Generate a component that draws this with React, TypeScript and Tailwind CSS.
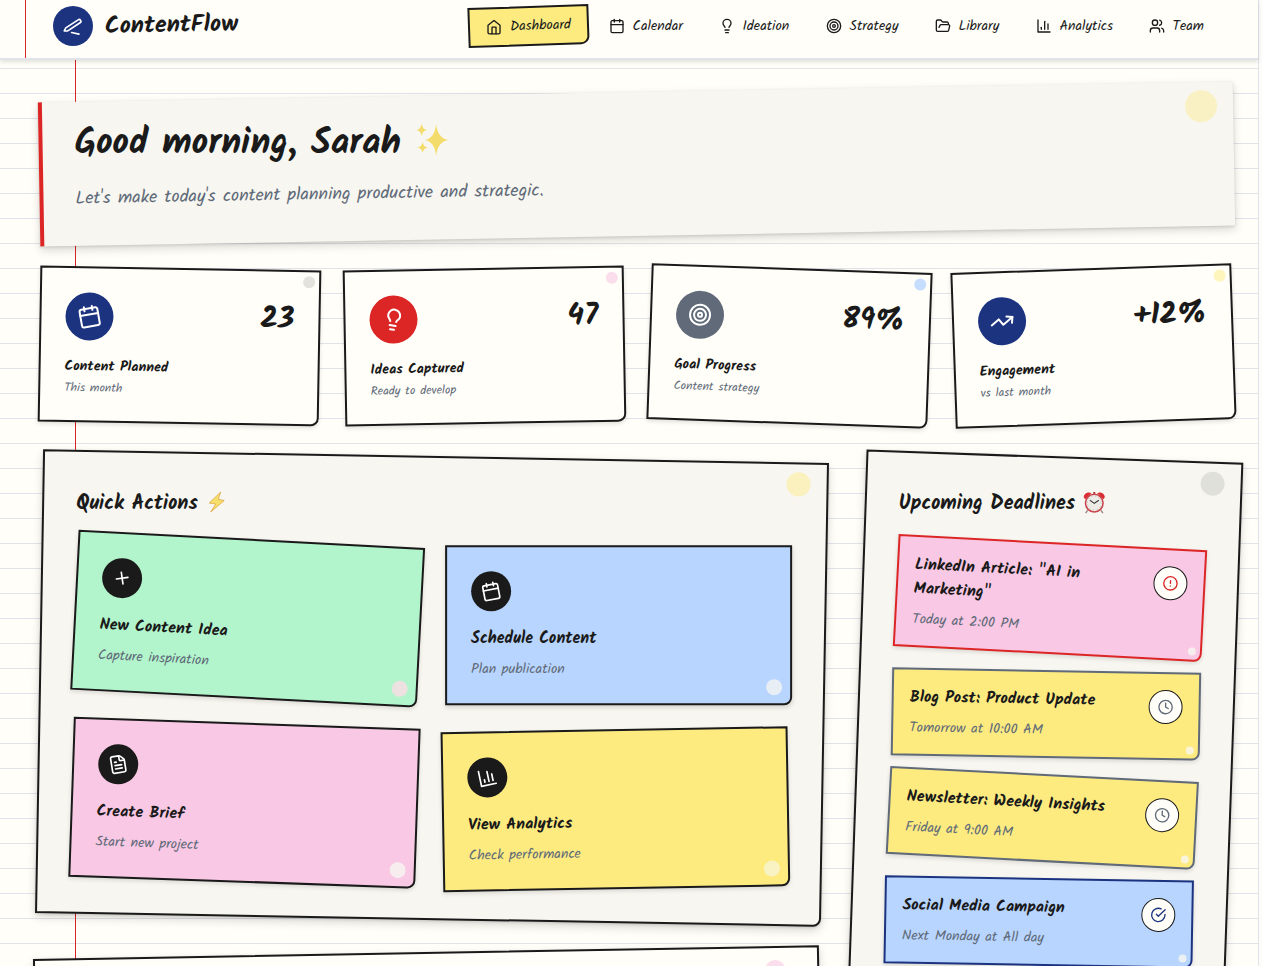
import type { ReactNode } from 'react'
import { clsx } from 'clsx'
import {
  Calendar,
  CircleAlert,
  Clock,
  FileText,
  FolderOpen,
  Lightbulb,
  Plus,
  Target,
  TrendingUp,
  Users,
  createLucideIcon,
} from 'lucide-react'
import type { LucideIcon } from 'lucide-react'

const SKETCH = 'rounded-br-lg border-2'
const SOFT_SHADOW = 'shadow-[0_2px_4px_rgba(0,0,0,0.12)]'
const DEEP_SHADOW = 'shadow-[0_4px_10px_rgba(0,0,0,0.15),0_1px_3px_rgba(0,0,0,0.12)]'

// Sharper variants of the stock icons
const SlimPen = createLucideIcon('slim-pen', [
  ['path', { d: 'M12 20h9', key: 'line' }],
  ['path', { d: 'M16.5 3.5a2.12 2.12 0 0 1 3 3L7 19l-4 1 1-4Z', key: 'pen' }],
])

const Home = createLucideIcon('home-sharp', [
  ['path', { d: 'm3 9 9-7 9 7v11a2 2 0 0 1-2 2H5a2 2 0 0 1-2-2z', key: 'walls' }],
  ['polyline', { points: '9 22 9 12 15 12 15 22', key: 'door' }],
])

const BarChart = createLucideIcon('bar-chart-sharp', [
  ['path', { d: 'M3 3v18h18', key: 'axis' }],
  ['path', { d: 'M18 17V9', key: 'b3' }],
  ['path', { d: 'M13 17V5', key: 'b2' }],
  ['path', { d: 'M8 17v-3', key: 'b1' }],
])

const CheckCircle = createLucideIcon('check-circle-open', [
  ['path', { d: 'M22 11.08V12a10 10 0 1 1-5.93-9.14', key: 'ring' }],
  ['path', { d: 'm9 11 3 3L22 4', key: 'check' }],
])

const NAV_ITEMS: { label: string; icon: LucideIcon; box: string; active?: boolean }[] = [
  { label: 'Dashboard', icon: Home, box: 'w-[120.5px] mr-[2px]', active: true },
  { label: 'Calendar', icon: Calendar, box: 'w-[110px]' },
  { label: 'Ideation', icon: Lightbulb, box: 'w-[107px]' },
  { label: 'Strategy', icon: Target, box: 'w-[109px]' },
  { label: 'Library', icon: FolderOpen, box: 'w-[101px]' },
  { label: 'Analytics', icon: BarChart, box: 'w-[113px]' },
  { label: 'Team', icon: Users, box: 'w-[91px]' },
]

const Header = () => (
  <header className="relative z-10 flex h-[60px] items-start border-b-2 border-[#e0e3ea] bg-[#fffef8] pt-[6px] pl-[53px] shadow-[0_2px_4px_rgba(0,0,0,0.12)]">
    <div className="absolute top-0 left-[25px] h-[58px] w-px bg-[#dc2626]" />
    <div className="flex h-10 w-[415px] items-center gap-3">
      <div className="flex size-10 items-center justify-center rounded-full bg-[#1c3480]">
        <SlimPen className="size-5 rotate-12 text-white" />
      </div>
      <div className="-rotate-1 text-2xl leading-8 font-bold">ContentFlow</div>
    </div>
    <nav className="flex h-10">
      {NAV_ITEMS.map(({ label, icon: Icon, box, active }) => (
        <div
          key={label}
          className={clsx(
            'flex h-10 shrink-0 items-center gap-2 px-4 text-sm whitespace-nowrap',
            SKETCH,
            box,
            active ? '-rotate-2 border-[#1a1a1a] bg-[#fdeb80]' : 'border-transparent'
          )}
        >
          <Icon className={clsx('size-4 shrink-0', active && 'rotate-2')} />
          <span>{label}</span>
        </div>
      ))}
    </nav>
  </header>
)

const Sparkles = () => (
  <svg viewBox="0 0 34 34" className="-mt-2 size-[34px]" fill="#f3dc6c">
    <path d="M20.500 1Q22 15.500 33 17Q22 18.500 20.500 33Q19 18.500 9 17Q19 15.500 20.500 1Z" />
    <path d="M6 1Q7 6.400 11.500 7Q7 7.600 6 13Q5 7.600 .5 7Q5 6.400 6 1Z" />
    <path d="M7 19Q7.800 24 12.500 24.500Q7.800 25.200 7 30Q6.200 25.200 1.500 24.500Q6.200 24 7 19Z" />
  </svg>
)

const Bolt = () => (
  <svg viewBox="0 0 17 22" className="-mt-[5px] h-[22px] w-[17px]">
    <path d="M12.500 1 1 12l6.500 1L2.500 21 16 9.500 10 8.300Z" fill="#f7e06a" stroke="#dfa64a" strokeWidth=".8" strokeLinejoin="round" />
  </svg>
)

const AlarmClock = () => (
  <svg viewBox="0 0 24 24" className="-mt-1 size-[23px]">
    <path d="m5 20-2 3M19 20l2 3" stroke="#9b8580" strokeWidth="1.500" />
    <path d="M1 6.500C1 3 5 0 9 2.200L2.500 8.500ZM23 6.500C23 3 19 0 15 2.200l6.500 6.300Z" fill="#dc2c34" />
    <path d="M12 3V1" stroke="#aa3333" strokeWidth="2" />
    <circle cx="12" cy="12.500" r="9.200" fill="#ecebe6" stroke="#c9454b" strokeWidth="1.600" />
    <circle cx="12" cy="12.500" r="7.300" fill="none" stroke="#bfb9b3" strokeWidth="1" strokeDasharray="1 2.900" />
    <path d="m7.500 9.500 4.500 3.200 4.800-3.200" fill="none" stroke="#3c3c3c" strokeWidth="1.100" />
  </svg>
)

const Banner = () => (
  <section className={clsx('relative h-36 -rotate-1 border-l-4 border-[#dc2626] bg-[#f7f6f0] p-8', DEEP_SHADOW)}>
    <div className="absolute top-2 right-4 size-8 rounded-full bg-[#fdeb80]/40" />
    <h1 className="flex h-10 rotate-1 items-center gap-[15px] text-4xl leading-10 font-bold">
      Good morning, Sarah
      <Sparkles />
    </h1>
    <p className="mt-3 h-7 text-lg leading-7 text-[#606a78]">
      Let's make today's content planning productive and strategic.
    </p>
  </section>
)

const STATS = [
  {
    label: 'Content Planned', sub: 'This month', value: '23',
    icon: Calendar, tilt: 'rotate-1', disc: 'bg-[#1c3480]', iconTilt: '-rotate-11', dot: 'bg-[#1a1a1a]/12',
  },
  {
    label: 'Ideas Captured', sub: 'Ready to develop', value: '47',
    icon: Lightbulb, tilt: '-rotate-1', disc: 'bg-[#dc2626]', iconTilt: 'rotate-10', dot: 'bg-[#f9c8e4]/60',
  },
  {
    label: 'Goal Progress', sub: 'Content strategy', value: '89%',
    icon: Target, tilt: 'rotate-2', disc: 'bg-[#606a78]', iconTilt: '', dot: 'bg-[#b8d5ff]/80',
  },
  {
    label: 'Engagement', sub: 'vs last month', value: '+12%',
    icon: TrendingUp, tilt: '-rotate-2', disc: 'bg-[#1c3480]', iconTilt: 'rotate-6', dot: 'bg-[#fdeb80]/50',
  },
]

const StatsRow = () => (
  <section className="grid grid-cols-4 gap-6">
    {STATS.map(({ icon: Icon, ...stat }) => (
      <div
        key={stat.label}
        className={clsx('relative h-[156px] border-[#1a1a1a] bg-[#fffef8] p-6', SKETCH, SOFT_SHADOW, stat.tilt)}
      >
        <div className={clsx('absolute top-1 right-1 size-3 rounded-full', stat.dot)} />
        <div className="mb-4 flex h-12 items-center justify-between">
          <div className={clsx('flex size-12 items-center justify-center rounded-full', stat.disc)}>
            <Icon className={clsx('size-6 text-white', stat.iconTilt)} />
          </div>
          <div className="text-3xl font-bold">{stat.value}</div>
        </div>
        <div className="mb-1 text-sm leading-5 font-bold">{stat.label}</div>
        <div className="text-xs leading-4 text-[#606a78]">{stat.sub}</div>
      </div>
    ))}
  </section>
)

const ACTIONS = [
  {
    title: 'New Content Idea', sub: 'Capture inspiration',
    icon: Plus, tilt: 'rotate-2', fill: 'bg-[#b2f5cc]', dot: 'bg-[#f3dfe3]/90',
  },
  {
    title: 'Schedule Content', sub: 'Plan publication',
    icon: Calendar, tilt: '-rotate-1', fill: 'bg-[#b8d5ff]', dot: 'bg-[#f7f6f0]/75',
  },
  {
    title: 'Create Brief', sub: 'Start new project',
    icon: FileText, tilt: 'rotate-1', fill: 'bg-[#f9c8e4]', dot: 'bg-[#f7f6f0]/80',
  },
  {
    title: 'View Analytics', sub: 'Check performance',
    icon: BarChart, tilt: '-rotate-2', fill: 'bg-[#fdeb80]', dot: 'bg-[#f7f6f0]/60',
  },
]

const QuickActions = () => (
  <section className={clsx('relative h-[464px] rotate-1 border-[#1a1a1a] bg-[#f7f6f0] p-8', SKETCH, DEEP_SHADOW)}>
    <div className="absolute top-2 right-4 size-6 rounded-full bg-[#fdeb80]/45" />
    <h2 className="mb-6 flex h-7 -rotate-1 items-center gap-[10px] text-xl leading-7 font-bold">
      Quick Actions
      <Bolt />
    </h2>
    <div className="grid grid-cols-2 gap-6">
      {ACTIONS.map(({ icon: Icon, ...action }) => (
        <div
          key={action.title}
          className={clsx('relative h-40 border-[#1a1a1a] p-6', SKETCH, SOFT_SHADOW, action.tilt, action.fill)}
        >
          <div className={clsx('absolute right-2 bottom-2 size-4 rounded-full', action.dot)} />
          <div className="mb-4 flex size-10 items-center justify-center rounded-full bg-[#1a1a1a]">
            <Icon className="size-5 -rotate-11 text-white" />
          </div>
          <div className="mb-2 text-base font-bold">{action.title}</div>
          <div className="text-sm text-[#606a78]">{action.sub}</div>
        </div>
      ))}
    </div>
  </section>
)

interface DeadlineProps {
  title: string
  due: string
  icon: LucideIcon
  iconColor: string
  className: string
}

const DEADLINES: DeadlineProps[] = [
  {
    title: 'LinkedIn Article: "AI in Marketing"',
    due: 'Today at 2:00 PM',
    icon: CircleAlert,
    iconColor: 'text-[#dc2626]',
    className: 'h-28 rotate-1 border-[#dc2626] bg-[#f9c8e4]',
  },
  {
    title: 'Blog Post: Product Update',
    due: 'Tomorrow at 10:00 AM',
    icon: Clock,
    iconColor: 'text-[#606a78]',
    className: 'h-[88px] -rotate-1 border-[#606a78] bg-[#fdeb80]',
  },
  {
    title: 'Newsletter: Weekly Insights',
    due: 'Friday at 9:00 AM',
    icon: Clock,
    iconColor: 'text-[#606a78]',
    className: 'h-[88px] rotate-1 border-[#606a78] bg-[#fdeb80]',
  },
  {
    title: 'Social Media Campaign',
    due: 'Next Monday at All day',
    icon: CheckCircle,
    iconColor: 'text-[#1c3480]',
    className: 'h-[88px] -rotate-1 border-[#1c3480] bg-[#b8d5ff]',
  },
]

const Deadline = ({ title, due, icon: Icon, iconColor, className }: DeadlineProps) => (
  <div className={clsx('relative flex items-start justify-between p-4', SKETCH, SOFT_SHADOW, className)}>
    <div className="w-[215px]">
      <div className="mb-2 text-base font-bold">{title}</div>
      <div className="text-sm text-[#606a78]">{due}</div>
    </div>
    <div className="flex size-[34px] items-center justify-center rounded-full border border-[#1a1a1a] bg-[#fffef8]">
      <Icon className={clsx('size-4', iconColor)} />
    </div>
    <div className="absolute right-1 bottom-1 size-2 rounded-full bg-[#f7f6f0]/80" />
  </div>
)

const UpcomingDeadlines = () => (
  <section className={clsx('relative h-[542px] rotate-2 border-[#1a1a1a] bg-[#f7f6f0] p-8', SKETCH, DEEP_SHADOW)}>
    <div className="absolute top-2 right-4 size-6 rounded-full bg-[#1a1a1a]/10" />
    <h2 className="mb-6 flex h-7 -rotate-2 items-center gap-2 text-xl leading-7 font-bold">
      Upcoming Deadlines
      <AlarmClock />
    </h2>
    <div className="flex flex-col gap-4">
      {DEADLINES.map((deadline) => (
        <Deadline key={deadline.title} {...deadline} />
      ))}
    </div>
  </section>
)

const Paper = ({ children }: { children: ReactNode }) => (
  <div className="h-[966px] overflow-hidden bg-[#fcfcfa]">
    <div className="relative h-[966px] w-[1259px] border-r border-[#e0e3ea] bg-[#fffef8] bg-[linear-gradient(transparent_24px,#e0e3ea_24px)] bg-[size:100%_25px] bg-[position:0_19px] font-['Kalam',cursive] text-[#1a1a1a]">
      <div className="absolute top-[60px] bottom-0 left-[75px] w-px bg-[#dc2626]" />
      {children}
    </div>
  </div>
)

export default function App() {
  return (
    <Paper>
      <Header />
      <main className="ml-[39px] flex w-[1195px] flex-col gap-8 pt-8">
        <Banner />
        <StatsRow />
        <div className="grid grid-cols-3 items-start gap-8">
          <div className="col-span-2 flex flex-col gap-8">
            <QuickActions />
            <section className={clsx('relative h-[700px] -rotate-1 border-[#1a1a1a] bg-[#fffef8]', SKETCH, DEEP_SHADOW)}>
              <div className="absolute top-3 right-8 size-5 rounded-full bg-[#f9c8e4]/60" />
            </section>
          </div>
          <UpcomingDeadlines />
        </div>
      </main>
    </Paper>
  )
}
